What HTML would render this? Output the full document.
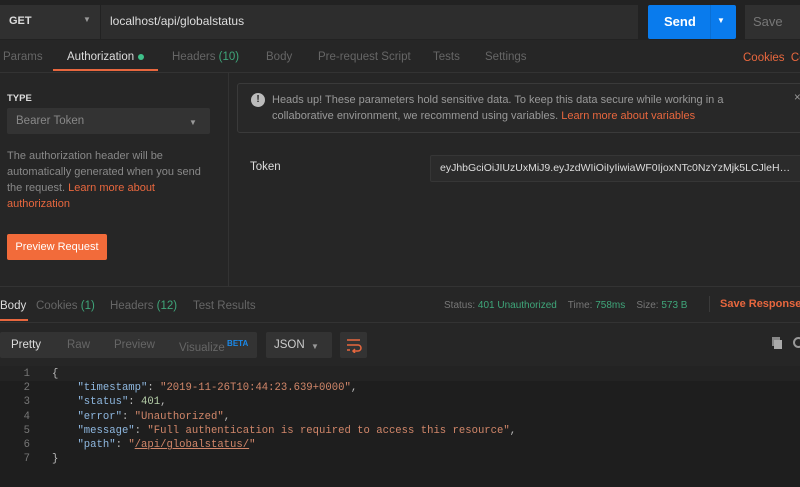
<!DOCTYPE html>
<html><head><meta charset="utf-8"><style>
*{box-sizing:border-box;margin:0;padding:0}
body{width:800px;height:487px;overflow:hidden;background:#262626;font-family:"Liberation Sans",sans-serif;font-size:11.5px;color:#aaa;position:relative}
.a{position:absolute;white-space:nowrap}
.or{color:#e8673e}
.gr{color:#3fa67a}
.mono{font-family:"Liberation Mono",monospace;font-size:10.6px}
</style></head><body>
<div class="a" style="left:0;top:0;width:800px;height:40px;background:#222"></div>
<div class="a" style="left:0;top:5px;width:100px;height:34px;background:#303030"></div>
<div class="a" style="left:9px;top:15px;color:#ddd;font-weight:bold;font-size:11px">GET</div>
<div class="a" style="left:83px;top:15px;color:#999;font-size:8px">▼</div>
<div class="a" style="left:100px;top:5px;width:538px;height:34px;background:#2d2d2d;border-left:1px solid #222"></div>
<div class="a" style="left:110px;top:14px;color:#ddd;font-size:12px">localhost/api/globalstatus</div>
<div class="a" style="left:648px;top:5px;width:88px;height:34px;background:#097bed;border-radius:2px"></div>
<div class="a" style="left:710px;top:5px;width:1px;height:34px;background:#0a6fd4"></div>
<div class="a" style="left:664px;top:14px;color:#fff;font-weight:bold;font-size:13px">Send</div>
<div class="a" style="left:717px;top:16px;color:#fff;font-size:8px">▼</div>
<div class="a" style="left:745px;top:5px;width:60px;height:34px;background:#303030"></div>
<div class="a" style="left:753px;top:14px;color:#777;font-size:13px">Save</div>
<div class="a" style="left:0;top:48px;width:800px;height:25px;border-bottom:1px solid #333"></div>
<div class="a" style="left:3px;top:51px;color:#666">Params</div>
<div class="a" style="left:67px;top:51px;color:#ddd">Authorization</div>
<div class="a" style="left:138px;top:54px;width:6px;height:6px;border-radius:50%;background:#3fc08a"></div>
<div class="a" style="left:53px;top:69px;width:105px;height:2px;background:#e8673e"></div>
<div class="a" style="left:172px;top:51px;color:#666">Headers <span class="gr">(10)</span></div>
<div class="a" style="left:266px;top:51px;color:#666">Body</div>
<div class="a" style="left:318px;top:51px;color:#666">Pre-request Script</div>
<div class="a" style="left:433px;top:51px;color:#666">Tests</div>
<div class="a" style="left:485px;top:51px;color:#666">Settings</div>
<div class="a or" style="left:743px;top:52px">Cookies&nbsp; Co</div>
<div class="a" style="left:228px;top:73px;width:1px;height:213px;background:#333"></div>
<div class="a" style="left:7px;top:93px;color:#ddd;font-weight:bold;font-size:9.5px">TYPE</div>
<div class="a" style="left:7px;top:108px;width:203px;height:26px;background:#333;border-radius:2px"></div>
<div class="a" style="left:16px;top:115px;color:#888">Bearer Token</div>
<div class="a" style="left:189px;top:118px;color:#999;font-size:8px">▼</div>
<div class="a" style="left:7px;top:148px;color:#888;line-height:16px;white-space:normal;width:210px;font-size:11px">The authorization header will be automatically generated when you send the request. <span class="or">Learn more about authorization</span></div>
<div class="a" style="left:7px;top:234px;width:100px;height:26px;background:#f26b3a;border-radius:2px;color:#fff;line-height:26px;text-align:center;font-size:11px">Preview Request</div>
<div class="a" style="left:237px;top:83px;width:580px;height:50px;border:1px solid #3a3a3a;border-radius:3px;background:#282828"></div>
<div class="a" style="left:251px;top:93px;width:14px;height:14px;border-radius:50%;background:#bbb;color:#222;font-weight:bold;font-size:10px;text-align:center;line-height:14px">!</div>
<div class="a" style="left:272px;top:92px;color:#999;line-height:16px;font-size:11px">Heads up! These parameters hold sensitive data. To keep this data secure while working in a<br>collaborative environment, we recommend using variables. <span class="or">Learn more about variables</span></div>
<div class="a" style="left:794px;top:92px;color:#999">×</div>
<div class="a" style="left:250px;top:161px;color:#ddd">Token</div>
<div class="a" style="left:430px;top:155px;width:380px;height:27px;background:#2b2b2b;border:1px solid #363636;border-radius:2px"></div>
<div class="a" style="left:440px;top:162px;color:#ddd;font-size:10.5px;width:354px;overflow:hidden;text-overflow:ellipsis">eyJhbGciOiJIUzUxMiJ9.eyJzdWIiOiIyIiwiaWF0IjoxNTc0NzYzMjk5LCJleHAiOjE1NzQ4</div>
<div class="a" style="left:0;top:286px;width:800px;height:1px;background:#333"></div>
<div class="a" style="left:0;top:300px;color:#ddd">Body</div>
<div class="a" style="left:0;top:319px;width:28px;height:2px;background:#e8673e"></div>
<div class="a" style="left:36px;top:300px;color:#666">Cookies <span class="gr">(1)</span></div>
<div class="a" style="left:110px;top:300px;color:#666">Headers <span class="gr">(12)</span></div>
<div class="a" style="left:193px;top:300px;color:#666">Test Results</div>
<div class="a" style="left:444px;top:300px;color:#777;font-size:10px">Status: <span class="gr">401 Unauthorized</span>&nbsp;&nbsp;&nbsp; Time: <span class="gr">758ms</span>&nbsp;&nbsp;&nbsp; Size: <span class="gr">573 B</span></div>
<div class="a" style="left:709px;top:296px;width:1px;height:16px;background:#3a3a3a"></div>
<div class="a or" style="left:720px;top:298px;font-weight:bold;font-size:11px">Save Response</div>
<div class="a" style="left:0;top:322px;width:800px;height:1px;background:#333"></div>
<div class="a" style="left:0;top:332px;width:257px;height:26px;background:#333;border-radius:2px"></div>
<div class="a" style="left:11px;top:339px;color:#ddd">Pretty</div>
<div class="a" style="left:67px;top:339px;color:#666">Raw</div>
<div class="a" style="left:114px;top:339px;color:#666">Preview</div>
<div class="a" style="left:179px;top:339px;color:#666">Visualize<sup style="color:#1a88e8;font-size:8px;font-weight:bold"> BETA</sup></div>
<div class="a" style="left:266px;top:332px;width:66px;height:26px;background:#333;border-radius:2px"></div>
<div class="a" style="left:274px;top:339px;color:#ccc">JSON</div>
<div class="a" style="left:311px;top:342px;color:#999;font-size:8px">▼</div>
<div class="a" style="left:340px;top:332px;width:27px;height:26px;background:#333;border-radius:2px"></div>
<svg class="a" style="left:345px;top:337px" width="17" height="16"><path d="M2 3h13M2 8h11a3 3 0 0 1 0 6H8M2 13h3M10 12l-2 2 2 2" stroke="#e8673e" stroke-width="1.5" fill="none"/></svg>
<div class="a" style="left:772px;top:337px;width:8px;height:9px;background:#888"></div>
<div class="a" style="left:774px;top:340px;width:8px;height:9px;background:#aaa"></div>
<div class="a" style="left:793px;top:337px;width:11px;height:11px;border:2px solid #999;border-radius:50%"></div>
<div class="a" style="left:0;top:366px;width:800px;height:121px;background:#1e1e1e"></div>
<div class="a" style="left:0;top:366px;width:800px;height:15px;background:#232323"></div>
<div class="a mono" style="left:20px;top:367px;color:#777;line-height:14.2px;text-align:right;width:10px">1<br>2<br>3<br>4<br>5<br>6<br>7</div>
<div class="a mono" style="left:52px;top:367px;line-height:14.2px;color:#bbb">{<br>&nbsp;&nbsp;&nbsp;&nbsp;<span style="color:#8fb8e0">"timestamp"</span>: <span style="color:#d2876a">"2019-11-26T10:44:23.639+0000"</span>,<br>&nbsp;&nbsp;&nbsp;&nbsp;<span style="color:#8fb8e0">"status"</span>: <span style="color:#b5cea8">401</span>,<br>&nbsp;&nbsp;&nbsp;&nbsp;<span style="color:#8fb8e0">"error"</span>: <span style="color:#d2876a">"Unauthorized"</span>,<br>&nbsp;&nbsp;&nbsp;&nbsp;<span style="color:#8fb8e0">"message"</span>: <span style="color:#d2876a">"Full authentication is required to access this resource"</span>,<br>&nbsp;&nbsp;&nbsp;&nbsp;<span style="color:#8fb8e0">"path"</span>: <span style="color:#d2876a">"<u>/api/globalstatus/</u>"</span><br>}</div>
</body></html>
